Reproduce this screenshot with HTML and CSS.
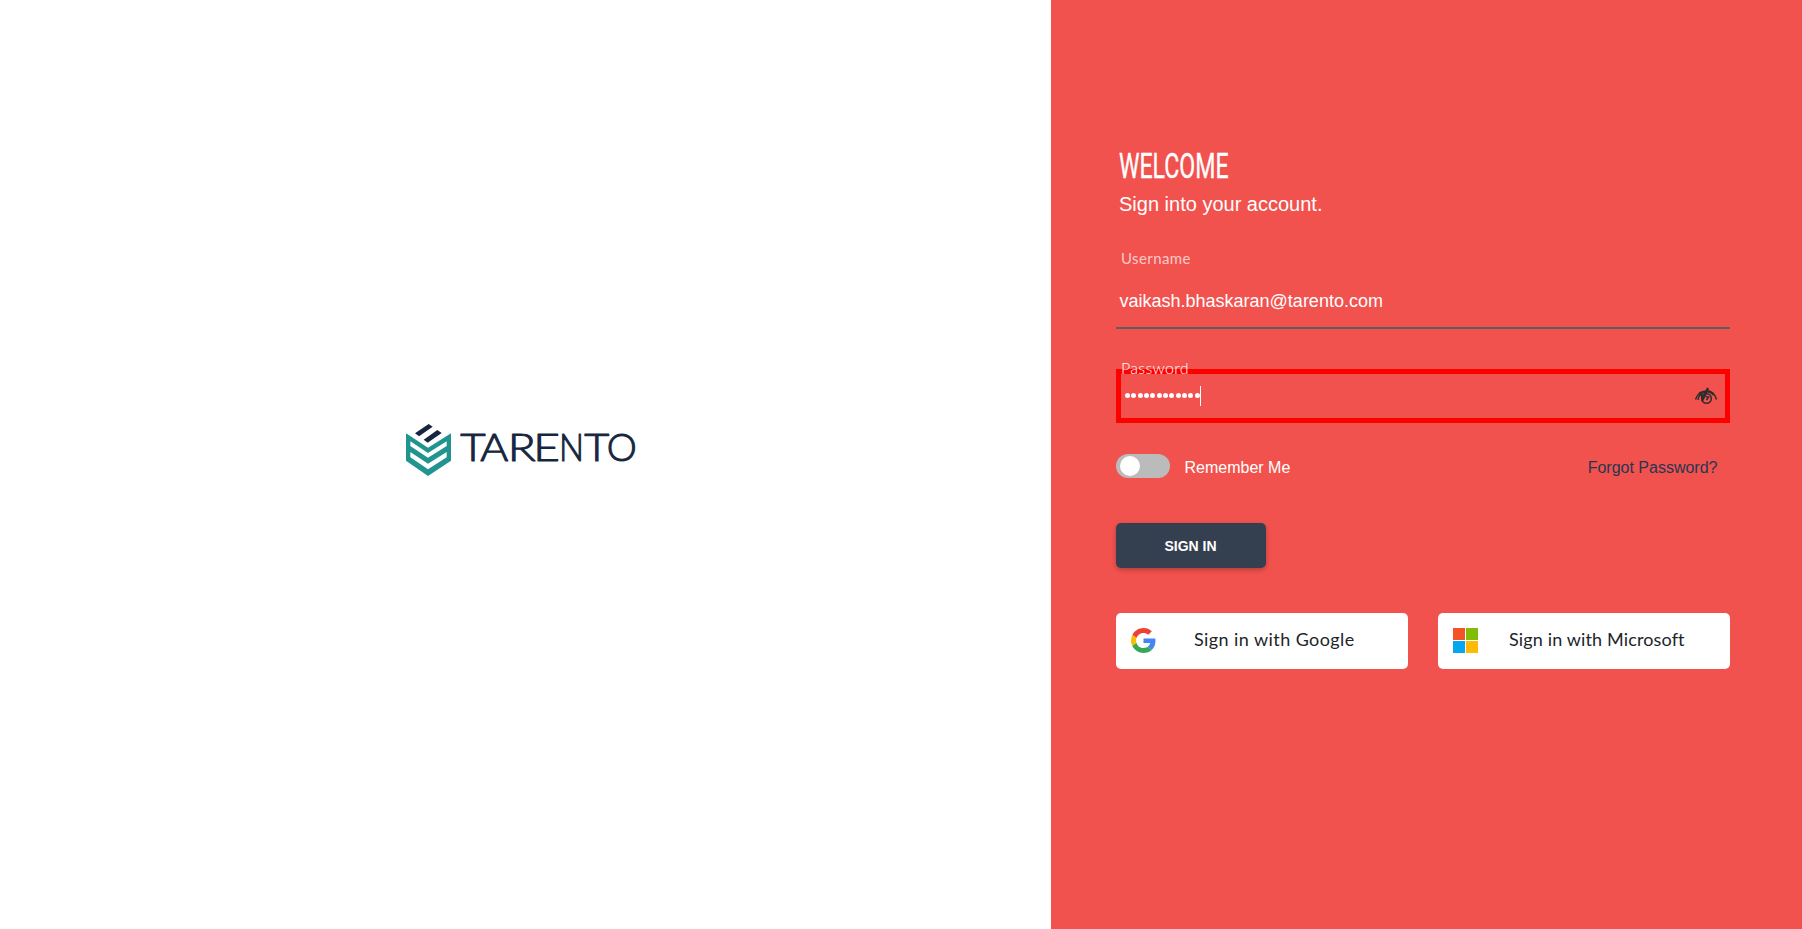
FILE: index.html
```html
<!DOCTYPE html>
<html lang="en">
<head>
<meta charset="utf-8">
<title>Tarento - Sign in</title>
<link rel="stylesheet" href="styles.css">
</head>
<body>
<main class="page">
  <section class="brand">
    <svg class="logo" viewBox="0 0 750 210" role="img" aria-label="Tarento">
      <g class="logo-dark">
        <path d="M60 55 101 27 113 35 72 64z"/>
        <path d="M86 74 127 45 140 54 98 83z"/>
      </g>
      <path class="logo-teal" fill-rule="evenodd" d="M33 55 99 98 168 55V137L99 183 33 137zM46 79V93L99 128 155 93V79L99 114zM46 111V127L99 163 155 127V111L99 146z"/>
      <text class="logo-name" y="137"><tspan x="196" textLength="76" lengthAdjust="spacingAndGlyphs">T</tspan><tspan x="256" textLength="84" lengthAdjust="spacingAndGlyphs">A</tspan><tspan x="338" textLength="84" lengthAdjust="spacingAndGlyphs">R</tspan><tspan x="415" textLength="80" lengthAdjust="spacingAndGlyphs">E</tspan><tspan x="492" textLength="75" lengthAdjust="spacingAndGlyphs">N</tspan><tspan x="568" textLength="75" lengthAdjust="spacingAndGlyphs">T</tspan><tspan x="635" textLength="90" lengthAdjust="spacingAndGlyphs">O</tspan></text>
    </svg>
  </section>
  <section class="panel">
    <form class="form">
      <h1 class="title">WELCOME</h1>
      <p class="subtitle">Sign into your account.</p>
      <label class="label">Username</label>
      <div class="field">vaikash.bhaskaran@tarento.com</div>
      <label class="label label-password">Password</label>
      <div class="field-password">
        <span class="dots"><i></i><i></i><i></i><i></i><i></i><i></i><i></i><i></i><i></i><i></i><i></i><i></i></span><span class="caret"></span>
        <svg class="eye" viewBox="0 0 24 18">
          <path d="M1.500 12.500C5 1.500 19 .5 22.500 12.500M4 13C5 5 15 2 19.500 8"/>
          <circle cx="12.500" cy="11.500" r="4.800"/>
          <path class="eye-slash" d="M14 1 8 14M6 5 9 11"/>
          <path d="M11.500 9.500 14.500 10 12.500 13"/>
        </svg>
      </div>
      <div class="options">
        <span class="toggle"><span class="knob"></span></span>
        <span class="remember">Remember Me</span>
        <a class="forgot">Forgot Password?</a>
      </div>
      <button class="submit" type="button">SIGN IN</button>
      <div class="social">
        <div class="provider">
          <svg class="provider-icon" viewBox="0 0 48 48">
            <path fill="#EA4335" d="M24 9.5c3.54 0 6.71 1.22 9.21 3.6l6.85-6.85C35.9 2.38 30.47 0 24 0 14.62 0 6.51 5.38 2.56 13.22l7.98 6.19C12.43 13.72 17.74 9.5 24 9.5z"/>
            <path fill="#4285F4" d="M46.98 24.55c0-1.57-.15-3.09-.38-4.55H24v9.02h12.94c-.58 2.96-2.26 5.48-4.78 7.18l7.73 6c4.51-4.18 7.09-10.36 7.09-17.65z"/>
            <path fill="#FBBC05" d="M10.53 28.59c-.48-1.45-.76-2.99-.76-4.59s.27-3.14.76-4.59l-7.98-6.19C.92 16.46 0 20.12 0 24c0 3.88.92 7.54 2.56 10.78l7.97-6.19z"/>
            <path fill="#34A853" d="M24 48c6.48 0 11.93-2.13 15.89-5.81l-7.73-6c-2.15 1.45-4.92 2.3-8.16 2.3-6.26 0-11.57-4.22-13.47-9.91l-7.98 6.19C6.51 42.62 14.62 48 24 48z"/>
          </svg>
          <span class="provider-name">Sign in with Google</span>
        </div>
        <div class="provider">
          <svg class="provider-icon" viewBox="0 0 25 25">
            <path fill="#f35325" d="M0 0h12v12H0z"/><path fill="#81bc06" d="M13 0h12v12H13z"/>
            <path fill="#05a6f0" d="M0 13h12v12H0z"/><path fill="#ffba08" d="M13 13h12v12H13z"/>
          </svg>
          <span class="provider-name microsoft">Sign in with Microsoft</span>
        </div>
      </div>
    </form>
  </section>
</main>
</body>
</html>
```
FILE: styles.css
```css
* { box-sizing: border-box; }
body { margin: 0; font-family: "Liberation Sans", Arial, sans-serif; color: #fff; }
.page { display: flex; height: 929px; overflow: hidden; }
.brand { width: 1051px; padding: 415px 0 0 395px; background: #fff; }
.logo { display: block; width: 250px; height: 70px; }
.logo-dark { fill: #16263f; }
.logo-teal { fill: #22948f; }
.logo-name { fill: #16263f; stroke: #16263f; stroke-width: 3px; stroke-linejoin: round; font: 300 112px Lato, sans-serif; }
.panel { flex: 1; padding: 145px 72px 0 65px; background: #f2524e; }
.form { display: flex; flex-direction: column; }
.title { margin: 0 0 0 3px; height: 43px; width: max-content; font: 400 35px/43px Roboto, sans-serif; -webkit-text-stroke: .4px #fff; transform: scaleX(.66); transform-origin: left; }
.subtitle { margin: 4px 0 0 3px; font-size: 20px; line-height: 24px; }
.label { margin: 32px 0 0 5px; height: 20px; font: 400 15px/20px Lato, sans-serif; letter-spacing: .4px; color: rgba(255,255,255,.7); }
.field { margin-top: 13px; height: 48px; padding: 0 3.5px; border-bottom: 2px solid #5d5d62; font-size: 18px; line-height: 40px; }
.label-password { position: relative; z-index: 1; margin-top: 29px; height: 11px; font-size: 16px; font-weight: 300; letter-spacing: .3px; color: #fff; }
.field-password { display: flex; align-items: center; height: 54px; border: 5px solid #f00; padding: 0 7px 0 4px; }
.dots { display: flex; gap: 1.35px; }
.dots i { width: 5px; height: 5px; border-radius: 50%; background: #fff; }
.caret { width: 1px; height: 20px; background: #fff; }
.dots, .caret { margin-top: -1px; }
.eye { width: 24px; height: 18px; margin: -1px 0 0 auto; fill: none; stroke: #2d2d2d; stroke-width: 1.5; }
.eye-slash { stroke-width: 2.4; }
.options { display: flex; align-items: center; height: 24px; margin-top: 31px; font-size: 16px; }
.toggle { width: 54px; height: 24px; padding: 2px 4px; border-radius: 12px; background: #bbb; }
.knob { display: block; width: 20px; height: 20px; border-radius: 50%; background: #fff; }
.remember { margin: 3px 0 0 14.5px; }
.forgot { margin: 3px 12.5px 0 auto; color: #263652; }
.submit { width: 150px; height: 45px; margin-top: 45px; padding: 0 1px 0 0; border: 0; border-radius: 5px; background: #343f4f; color: #fff; font: 700 14px "Liberation Sans", Arial, sans-serif; box-shadow: 0 2px 5px rgba(0,0,0,.26); }
.social { display: flex; gap: 30px; margin-top: 45px; }
.provider { display: flex; align-items: center; width: 292px; height: 56px; padding-left: 15px; border-radius: 5px; background: #fff; color: #212529; }
.provider-icon { width: 25px; height: 25px; flex: none; margin-top: -1px; }
.provider-name { margin: -5px 0 0 38px; font: 400 18px/24px Lato, sans-serif; letter-spacing: .42px; white-space: nowrap; }
.microsoft { margin-left: 31px; letter-spacing: .14px; }
```
